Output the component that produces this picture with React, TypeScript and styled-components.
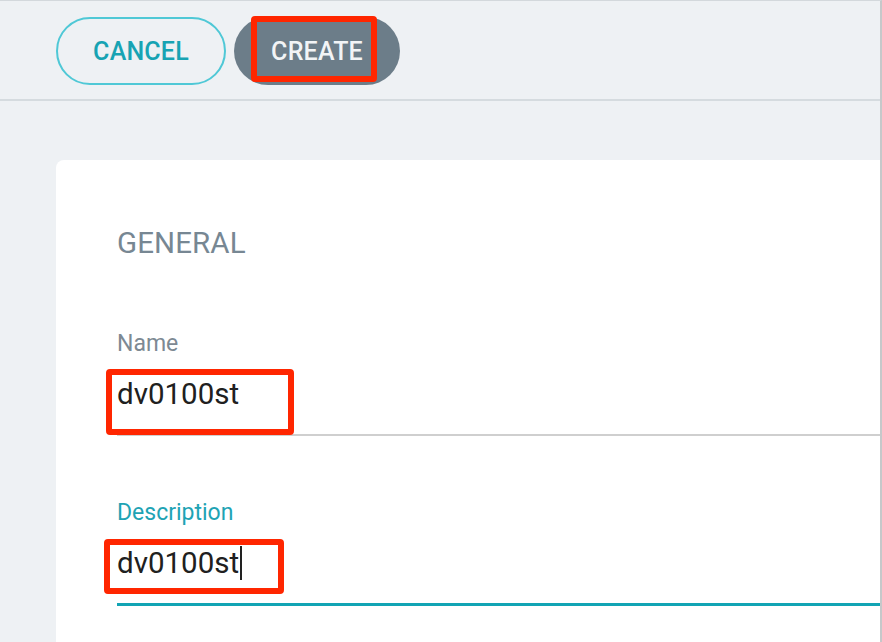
import React from "react";
import styled, { createGlobalStyle } from "styled-components";

const Global = createGlobalStyle`
  html, body { margin: 0; padding: 0; background: #eef1f4; }
  body { font-family: Roboto, "Noto Sans", Arial, sans-serif; }
  * { box-sizing: border-box; }
`;

const Page = styled.div`
  width: 882px;
  height: 642px;
  overflow: hidden;
  background: #eef1f4;
  border-top: 1px solid #d3d8dc;
  border-right: 2px solid #c6c8ca;
  display: flex;
  flex-direction: column;
`;

const Toolbar = styled.div`
  height: 100px;
  flex: none;
  display: flex;
  align-items: center;
  gap: 8px;
  padding: 2px 0 0 56px;
  border-bottom: 2px solid #d5dbdf;
`;

const PillButton = styled.button<{ $variant: "outline" | "filled" }>`
  height: 68px;
  border-radius: 34px;
  font-family: Roboto, Arial, sans-serif;
  font-size: 25px;
  font-weight: 500;
  letter-spacing: 0.2px;
  display: flex;
  align-items: center;
  justify-content: center;
  cursor: pointer;
  padding: 0;
  ${(p) =>
    p.$variant === "outline"
      ? `width: 170px; background: transparent; border: 2px solid #4fc8d6; color: #17a3b3;`
      : `width: 166px; background: #6c7d89; border: none; color: #f2f4f6;`}
`;

const Marked = styled.span<{ $pad: string }>`
  position: relative;
  display: inline-block;
  &::after {
    content: "";
    position: absolute;
    inset: ${(p) => p.$pad};
    border: 6px solid #ff2600;
    border-radius: 4px;
    pointer-events: none;
  }
`;

const Card = styled.div`
  margin: 59px 0 0 56px;
  flex: 1;
  background: #ffffff;
  border-radius: 8px 0 0 0;
  padding: 66px 0 0 61px;
`;

const SectionTitle = styled.div`
  font-size: 29.5px;
  color: #778793;
  line-height: 34px;
  letter-spacing: 0.1px;
`;

const Field = styled.div<{ $top: number }>`
  margin-top: ${(p) => p.$top}px;
  display: flex;
  flex-direction: column;
`;

const Label = styled.div<{ $focused?: boolean }>`
  font-size: 23px;
  line-height: 28px;
  color: ${(p) => (p.$focused ? "#1ea3b4" : "#7d8993")};
`;

const Value = styled.div<{ $h: number }>`
  margin-top: 19px;
  font-size: 29.5px;
  line-height: 34px;
  color: #202020;
  height: ${(p) => p.$h}px;
  display: flex;
  align-items: flex-start;
`;

const Underline = styled.div<{ $focused?: boolean }>`
  height: ${(p) => (p.$focused ? 3 : 2)}px;
  background: ${(p) => (p.$focused ? "#12a4b4" : "#cfcfcf")};
`;

const Caret = styled.span`
  display: inline-block;
  width: 2px;
  height: 34px;
  background: #222;
  margin-left: 1px;
  vertical-align: top;
`;

export default function App() {
  return (
    <>
      <Global />
      <Page>
        <Toolbar>
          <PillButton $variant="outline">CANCEL</PillButton>
          <PillButton $variant="filled">
            <Marked $pad="-21px -14px -16px -20px">CREATE</Marked>
          </PillButton>
        </Toolbar>
        <Card>
          <SectionTitle>GENERAL</SectionTitle>
          <Field $top={70}>
            <Label>Name</Label>
            <Value $h={57}>
              <Marked $pad="-8px -55px -24px -11px">dv0100st</Marked>
            </Value>
            <Underline />
          </Field>
          <Field $top={63}>
            <Label $focused>Description</Label>
            <Value $h={57}>
              <Marked $pad="-7px -42px -14px -13px">
                dv0100st
                <Caret />
              </Marked>
            </Value>
            <Underline $focused />
          </Field>
        </Card>
      </Page>
    </>
  );
}
